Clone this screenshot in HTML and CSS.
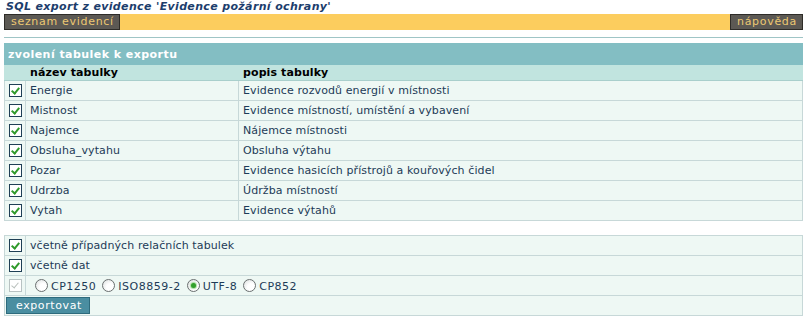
FILE: index.html
```html
<!DOCTYPE html>
<html lang="cs">
<head>
<meta charset="utf-8">
<title>SQL export</title>
<link rel="stylesheet" href="styles.css">
</head>
<body>
<div class="page">
  <h1 class="title">SQL export z evidence 'Evidence požární ochrany'</h1>
  <div class="toolbar">
    <a class="tbtn">seznam evidencí</a>
    <a class="tbtn">nápověda</a>
  </div>
  <div class="sep"></div>

  <table class="grid">
    <colgroup><col class="c1"><col class="c2"><col></colgroup>
    <tr class="cap"><td colspan="3">zvolení tabulek k exportu</td></tr>
    <tr class="head"><td></td><td>název tabulky</td><td>popis tabulky</td></tr>
    <tr><td class="cb"><span class="chk"></span></td><td>Energie</td><td>Evidence rozvodů energií v místnosti</td></tr>
    <tr><td class="cb"><span class="chk"></span></td><td>Mistnost</td><td>Evidence místností, umístění a vybavení</td></tr>
    <tr><td class="cb"><span class="chk"></span></td><td>Najemce</td><td>Nájemce místnosti</td></tr>
    <tr><td class="cb"><span class="chk"></span></td><td>Obsluha_vytahu</td><td>Obsluha výtahu</td></tr>
    <tr><td class="cb"><span class="chk"></span></td><td>Pozar</td><td>Evidence hasicích přístrojů a kouřových čidel</td></tr>
    <tr><td class="cb"><span class="chk"></span></td><td>Udrzba</td><td>Údržba místností</td></tr>
    <tr><td class="cb"><span class="chk"></span></td><td>Vytah</td><td>Evidence výtahů</td></tr>
  </table>

  <table class="grid opts">
    <colgroup><col class="c1"><col></colgroup>
    <tr><td class="cb"><span class="chk"></span></td><td>včetně případných relačních tabulek</td></tr>
    <tr><td class="cb"><span class="chk"></span></td><td>včetně dat</td></tr>
    <tr><td class="cb"><span class="chk off"></span></td><td class="radios"><span class="opt"><span class="rad"></span>CP1250</span><span class="opt"><span class="rad"></span>ISO8859-2</span><span class="opt"><span class="rad on"></span>UTF-8</span><span class="opt"><span class="rad"></span>CP852</span></td></tr>
    <tr><td colspan="2" class="btncell"><span class="exp">exportovat</span></td></tr>
  </table>
</div>
</body>
</html>
```

FILE: styles.css
```css
html, body { margin: 0; padding: 0; background: #fff; }
body {
  font-family: "DejaVu Sans", Verdana, sans-serif;
  font-size: 11px;
  color: #1d3b57;
}
.page { padding: 0 4px; }
.title {
  margin: 0;
  padding: 0 0 0 2px;
  height: 14px;
  line-height: 13px;
  font-size: 11px;
  font-weight: bold;
  font-style: italic;
  letter-spacing: 0.35px;
  color: #1c3d6c;
}
.toolbar {
  display: flex;
  justify-content: space-between;
  background: #fccd5e;
  height: 16px;
}
.tbtn {
  display: block;
  background: #5c5954;
  border: 1px solid #2e2c28;
  color: #ecc872;
  height: 14px;
  line-height: 14px;
  padding: 0 5px 0 6px;
  font-size: 11px;
  letter-spacing: 0.7px;
}
.sep {
  margin-top: 7px;
  border-top: 1px solid #9fc5c6;
  height: 5px;
}
.grid {
  width: 100%;
  border-collapse: collapse;
  background: #eef8f4;
  margin: 0;
}
.grid.opts { margin-top: 14px; }
.grid col.c1 { width: 21px; }
.grid col.c2 { width: 213px; }
.grid td {
  border: 1px solid #c7d8d8;
  height: 19px;
  padding: 0 4px;
  white-space: nowrap;
  vertical-align: middle;
  letter-spacing: 0.1px;
}
.grid tr.cap td {
  background: #83bec3;
  color: #fff;
  font-weight: bold;
  height: 20px;
  padding-left: 3px;
  letter-spacing: 0.45px;
  border-color: #83bec3;
}
.grid tr.head td {
  background: #c1e4df;
  color: #000;
  font-weight: bold;
  height: 15px;
  border-color: #c1e4df;
  border-bottom-color: #a9cfcc;
}
.grid td.cb { padding: 0 0 0 4px; }
.chk {
  display: block;
  width: 11px;
  height: 11px;
  border: 1px solid #1f3f55;
  background: #fff;
  position: relative;
}
.chk::after {
  content: "";
  position: absolute;
  left: 3px;
  top: 1px;
  width: 3px;
  height: 6px;
  border: solid #2f9a2a;
  border-width: 0 2px 2px 0;
  transform: rotate(40deg);
}
.chk.off { border-color: #b8c2c2; }
.chk.off::after { border-color: #b9c0bc; border-width: 0 1px 1px 0; }
.grid td.radios { padding-left: 9px; letter-spacing: 0.5px; }
.opt { display: inline-block; margin-right: 6px; }
.rad {
  display: inline-block;
  width: 11px;
  height: 11px;
  border: 1px solid #6a7070;
  border-radius: 50%;
  background: radial-gradient(circle at 65% 65%, #fff 35%, #d8dcdc 100%);
  vertical-align: -2px;
  margin: 0 3px 0 0;
  position: relative;
}
.rad.on::after {
  content: "";
  position: absolute;
  left: 3px;
  top: 3px;
  width: 5px;
  height: 5px;
  border-radius: 50%;
  background: #33a02c;
  box-shadow: 0 0 1px 1px #a8dca0;
}
.grid td.btncell { padding: 0 0 0 1px; height: 19px; }
.exp {
  display: inline-block;
  background: #4a8ea1;
  border: 1px solid #2e6b7d;
  color: #fff;
  height: 15px;
  line-height: 15px;
  padding: 0 7px 0 9px;
  letter-spacing: 0.6px;
  vertical-align: middle;
}
```
